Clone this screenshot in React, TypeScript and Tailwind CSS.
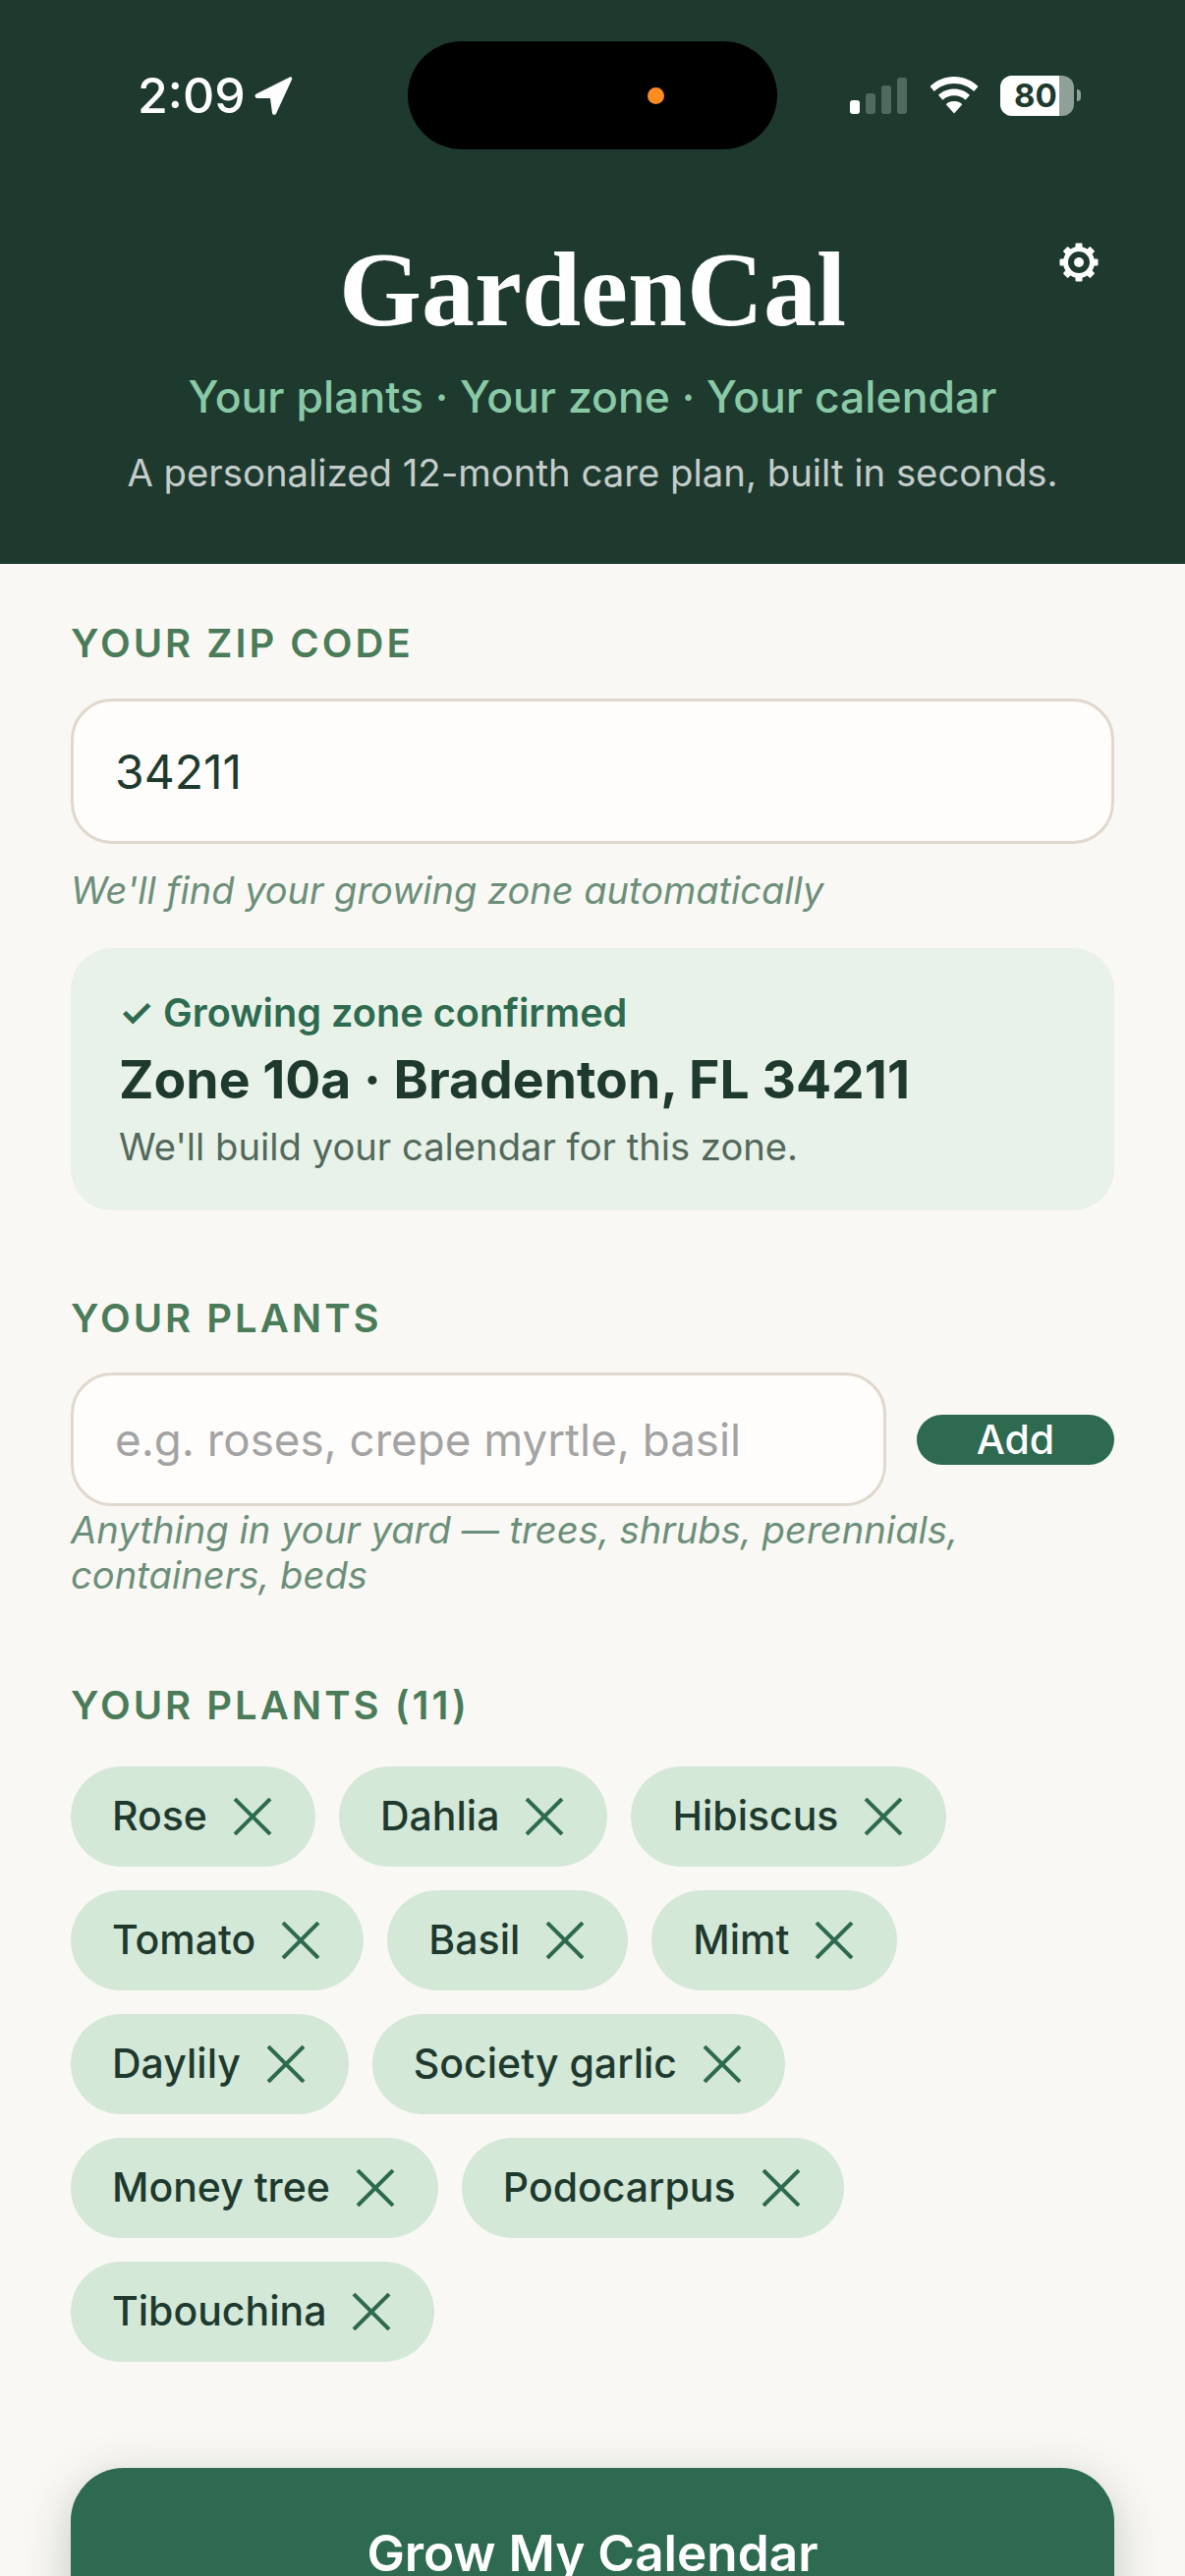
const plants = [
  "Rose",
  "Dahlia",
  "Hibiscus",
  "Tomato",
  "Basil",
  "Mimt",
  "Daylily",
  "Society garlic",
  "Money tree",
  "Podocarpus",
  "Tibouchina",
]

function StatusBar() {
  return (
    <div className="flex h-[152px] items-start pl-[140px] pt-[42px]">
      <div className="flex h-[110px] w-[275px] items-center gap-[8px] text-[50px] font-medium leading-none text-white">
        <span>2:09</span>
        <svg viewBox="0 0 40 40" className="h-[40px] w-[40px]" fill="#ffffff">
          <path d="M37 1.500 3 18.500c-2.500 1.300-1.600 4.500 1 4.500h13l2 15c.4 2.500 3.400 2.700 4.200.3L39 4c.6-1.800-.4-3.300-2-2.500Z" />
        </svg>
      </div>
      <div className="flex h-[110px] w-[376px] items-center justify-end rounded-[55px] bg-black pr-[115px]">
        <div className="h-[17px] w-[17px] rounded-full bg-[#ff8c1f]" />
      </div>
      <div className="ml-[74px] flex h-[110px] items-center">
        <div className="flex items-end gap-[6px]">
          <div className="h-[14px] w-[10px] rounded-[3px] bg-white" />
          <div className="h-[21px] w-[10px] rounded-[3px] bg-[#4f6b5e]" />
          <div className="h-[29px] w-[10px] rounded-[3px] bg-[#4f6b5e]" />
          <div className="h-[37px] w-[10px] rounded-[3px] bg-[#4f6b5e]" />
        </div>
        <svg viewBox="0 0 50 38" className="ml-[23px] h-[38px] w-[50px]" fill="#ffffff">
          <path d="M25 0C15.500 0 7 3.800 0.500 10l4.300 5C10 10 17 7 25 7s15 3 20.200 8l4.300-5C43 3.800 34.500 0 25 0Z" />
          <path d="M25 12.500c-6.300 0-12 2.400-16 6.300l4.400 5c3-2.800 7-4.500 11.600-4.500s8.600 1.700 11.600 4.500l4.400-5c-4-3.900-9.700-6.300-16-6.300Z" />
          <path d="M25 25c-3.300 0-6.200 1.200-8.300 3.200L25 37.500l8.300-9.300C31.200 26.200 28.300 25 25 25Z" />
        </svg>
        <div className="ml-[22px] flex items-center gap-[3px]">
          <div className="relative flex h-[41px] w-[75px] overflow-hidden rounded-[12px] bg-[#8fa098]">
            <div className="h-full w-[60px] bg-white" />
            <span className="absolute left-[14px] top-0 text-[33px] font-bold leading-[41px] text-[#1e3a2f]">80</span>
          </div>
          <div className="h-[12px] w-[4px] rounded-r-[4px] bg-[#8fa098]" />
        </div>
      </div>
    </div>
  )
}

function Gear() {
  const teeth = [0, 45, 90, 135, 180, 225, 270, 315]
  return (
    <svg viewBox="0 0 40 40" className="absolute right-[88px] top-[95px] h-[40px] w-[40px]" fill="#ffffff">
      {teeth.map((deg) => (
        <rect key={deg} x="16.500" y="0.500" width="7" height="8" rx="1" transform={`rotate(${deg} 20 20)`} />
      ))}
      <circle cx="20" cy="20" r="13.500" fill="none" stroke="#ffffff" strokeWidth="5" />
      <circle cx="20" cy="20" r="5" />
    </svg>
  )
}

function Label({ children }: { children: React.ReactNode }) {
  return (
    <div className="text-[40px] font-semibold leading-[47px] tracking-[0.075em] text-[#4a7c59]">{children}</div>
  )
}

function Chip({ name }: { name: string }) {
  return (
    <div className="flex h-[102px] items-center gap-[26px] rounded-[51px] bg-[#d4e8d8] pl-[42px] pr-[44px] text-[41px] font-medium text-[#1e3a2f]">
      <span>{name}</span>
      <svg viewBox="0 0 40 38" className="h-[38px] w-[40px]" fill="none" stroke="#2d6a4f" strokeWidth="4">
        <path d="M2 1 38 37M38 1 2 37" />
      </svg>
    </div>
  )
}

export default function App() {
  return (
    <div className="h-[2622px] w-[1206px] overflow-hidden bg-[#faf8f4] font-['Inter',sans-serif]">
      {/* Header */}
      <header className="relative h-[574px] bg-[#1e3a2f] text-center">
        <StatusBar />
        <div className="relative">
          <Gear />
          <h1 className="pt-[81px] font-['Liberation_Serif',serif] text-[108px] font-bold leading-[124px] text-white">
            GardenCal
          </h1>
          <p className="mt-[20px] text-[44.500px] font-medium leading-[54px] text-[#8ac9a6]">
            Your plants · Your zone · Your calendar
          </p>
          <p className="mt-[26px] text-[38.300px] leading-[48px] text-white/75">
            A personalized 12-month care plan, built in seconds.
          </p>
        </div>
      </header>

      <main className="px-[72px]">
        <div className="pt-[57px]">
          <Label>YOUR ZIP CODE</Label>
          <input
            readOnly
            value="34211"
            className="mt-[33px] h-[148px] w-full rounded-[42px] border-[3px] border-[#e0d8cc] bg-[#fffdfb] px-[42px] text-[48px] text-[#1e3a2f] outline-none"
          />
          <p className="mt-[24px] text-[38px] italic leading-[47px] text-[#6b8f7a]">
            We'll find your growing zone automatically
          </p>
        </div>

        <div className="mt-[35px] h-[267px] rounded-[42px] bg-[#e8f2e8] px-[49px] pt-[43px]">
          <div className="text-[39.700px] font-semibold leading-[47px] text-[#2d6a4f]">✓ Growing zone confirmed</div>
          <div className="mt-[11px] text-[53.500px] font-bold leading-[65px] text-[#1e3a2f]">
            Zone 10a · Bradenton, FL 34211
          </div>
          <div className="mt-[14px] text-[38.200px] leading-[45px] text-[#52695c]">We'll build your calendar for this zone.</div>
        </div>

        <div className="mt-[86px]">
          <Label>YOUR PLANTS</Label>
          <div className="mt-[32px] flex items-center gap-[31px]">
            <input
              readOnly
              placeholder="e.g. roses, crepe myrtle, basil"
              className="h-[136px] w-[830px] rounded-[42px] border-[3px] border-[#e0d8cc] bg-[#fffdfb] px-[42px] text-[45.700px] text-[#1e3a2f] outline-none placeholder:text-[#a3a3a3]"
            />
            <button className="h-[51px] flex-1 rounded-[26px] bg-[#2d6a4f] text-[41px] font-medium leading-[51px] text-white">
              Add
            </button>
          </div>
          <p className="mt-[1px] text-[38.200px] italic leading-[46px] text-[#6b8f7a]">
            Anything in your yard — trees, shrubs, perennials, containers, beds
          </p>
        </div>

        <div className="mt-[86px]">
          <Label>YOUR PLANTS (11)</Label>
          <div className="mt-[39px] flex flex-wrap gap-[24px]">
            {plants.map((p) => (
              <Chip key={p} name={p} />
            ))}
          </div>
        </div>

        <button className="mt-[108px] h-[172px] w-full rounded-[54px] bg-[#2d6a4f] text-[51.300px] font-semibold text-white shadow-[0_12px_48px_rgba(30,58,47,0.25)]">
          Grow My Calendar
        </button>
      </main>
    </div>
  )
}
